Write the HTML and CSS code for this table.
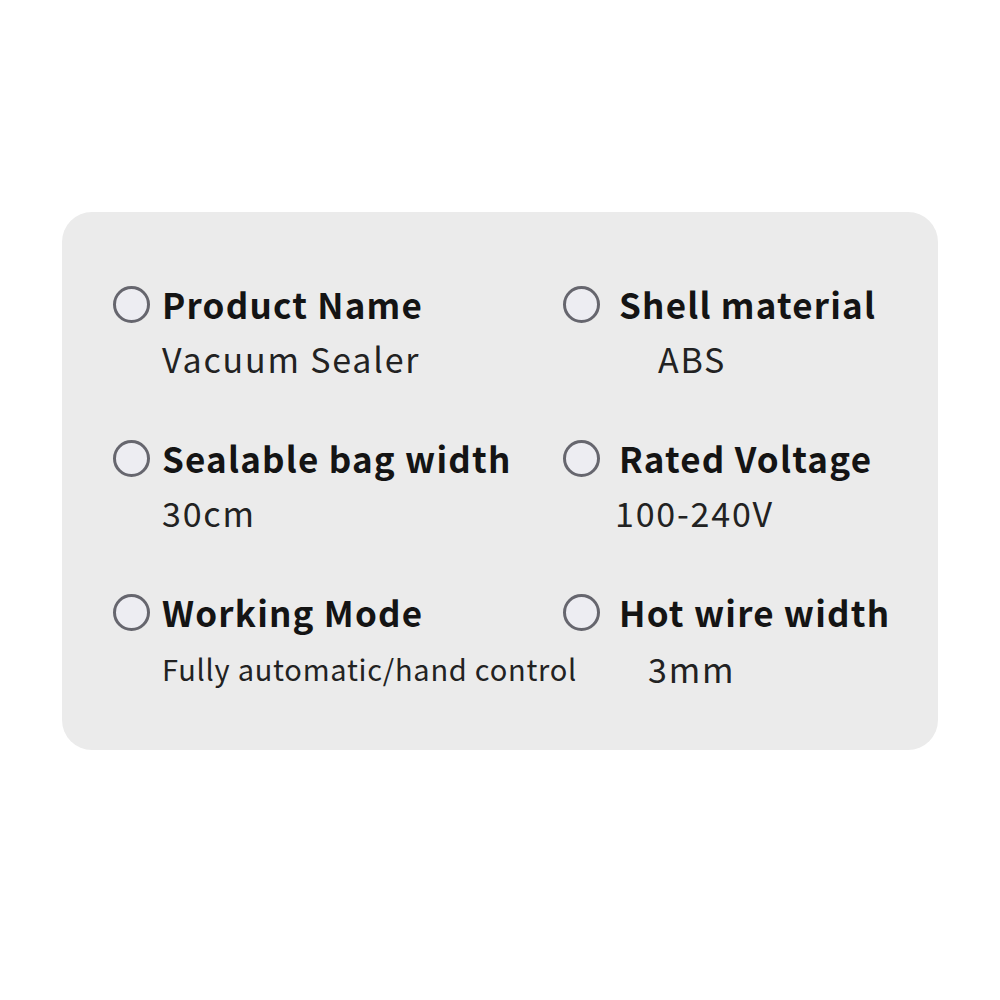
FILE: index.html
```html
<!DOCTYPE html>
<html lang="en">
<head>
<meta charset="utf-8">
<title>Vacuum Sealer Specs</title>
<link rel="stylesheet" href="styles.css">
</head>
<body>
<div class="card">
  <div class="item">
    <div class="head"><span class="dot"></span><span class="label">Product Name</span></div>
    <div class="value">Vacuum Sealer</div>
  </div>
  <div class="item item-right">
    <div class="head"><span class="dot"></span><span class="label">Shell material</span></div>
    <div class="value value-abs">ABS</div>
  </div>
  <div class="item">
    <div class="head"><span class="dot"></span><span class="label">Sealable bag width</span></div>
    <div class="value">30cm</div>
  </div>
  <div class="item item-right">
    <div class="head"><span class="dot"></span><span class="label">Rated Voltage</span></div>
    <div class="value value-volt">100-240V</div>
  </div>
  <div class="item">
    <div class="head"><span class="dot"></span><span class="label">Working Mode</span></div>
    <div class="value value-small">Fully automatic/hand control</div>
  </div>
  <div class="item item-right">
    <div class="head"><span class="dot"></span><span class="label">Hot wire width</span></div>
    <div class="value value-wire">3mm</div>
  </div>
</div>
</body>
</html>
```
FILE: styles.css
```css
html, body {
  margin: 0;
  padding: 0;
  background: #ffffff;
}
body {
  font-family: "Noto Sans CJK SC", "Noto Sans", sans-serif;
  color: #1c1c1c;
}
.card {
  box-sizing: border-box;
  width: 876px;
  height: 538px;
  margin: 212px 0 0 62px;
  padding: 72px 0 0 51px;
  background: #ebebeb;
  border-radius: 30px;
  display: grid;
  grid-template-columns: 450px 1fr;
  row-gap: 59px;
  align-content: start;
}
.head {
  display: flex;
  align-items: flex-start;
  height: 40px;
}
.dot {
  box-sizing: border-box;
  width: 37px;
  height: 37px;
  margin-top: 2px;
  border-radius: 50%;
  border: 3px solid #66666e;
  background: #ededf2;
  flex: none;
}
.label {
  font-weight: 700;
  font-size: 35px;
  line-height: 40px;
  letter-spacing: 1.2px;
  margin-left: 12px;
  color: #141414;
  white-space: nowrap;
}
.item-right .label {
  margin-left: 19px;
}
.value {
  margin-top: 15px;
  font-size: 34px;
  line-height: 40px;
  letter-spacing: 1.8px;
  padding-left: 49px;
  color: #222222;
  white-space: nowrap;
}
.value-small {
  margin-top: 16px;
  font-size: 29px;
  letter-spacing: 0.75px;
}
.value-abs {
  padding-left: 95px;
}
.value-volt {
  padding-left: 52px;
}
.value-wire {
  padding-left: 85px;
  margin-top: 17px;
}
```
